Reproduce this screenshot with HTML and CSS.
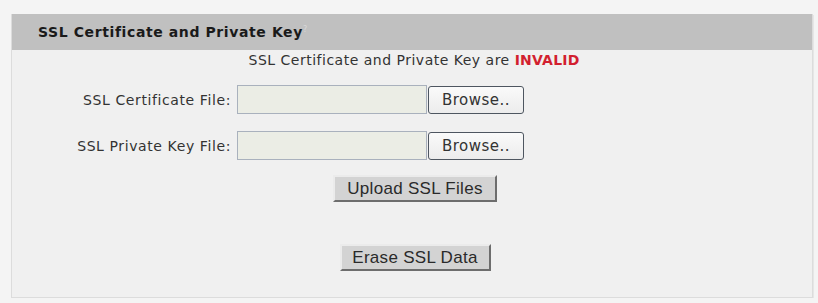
FILE: index.html
```html
<!DOCTYPE html>
<html>
<head>
<meta charset="utf-8">
<link rel="stylesheet" href="styles.css">
</head>
<body>
<div class="panel">
  <div class="panel-head">SSL Certificate and Private Key<span class="mark">?</span></div>
  <div class="panel-body">
    <div class="status">SSL Certificate and Private Key are <span class="invalid">INVALID</span></div>
    <div class="file-rows">
      <label class="file-label">SSL Certificate File:</label>
      <div class="file-ctrl"><span class="file-input"></span><button class="browse">Browse..</button></div>
      <label class="file-label">SSL Private Key File:</label>
      <div class="file-ctrl"><span class="file-input"></span><button class="browse">Browse..</button></div>
    </div>
    <div class="actions">
      <button class="btn upload">Upload SSL Files</button>
      <button class="btn erase">Erase SSL Data</button>
    </div>
  </div>
</div>
</body>
</html>
```
FILE: styles.css
```css
html, body {
  margin: 0;
  padding: 0;
  background: #f4f4f4;
}
body {
  padding: 14px 7px 0 11px;
  font-family: "DejaVu Sans", sans-serif;
  color: #333;
}
.panel {
  width: 800px;
  border: 1px solid #dcdcdc;
  border-top: none;
  background: #f0f0f0;
  box-shadow: 1px 1px 0 #e6e6e6;
}
.panel-head {
  height: 36px;
  background: #c0c0c0;
  padding-left: 26px;
  font-size: 14px;
  letter-spacing: 0.6px;
  font-weight: bold;
  color: #1a1a1a;
  display: flex;
  align-items: center;
}
.mark {
  font-size: 8px;
  color: #d8d8d8;
  align-self: flex-start;
  margin-top: 11px;
  font-weight: normal;
}
.panel-body {
  padding: 2px 0 26px;
}
.status {
  text-align: center;
  font-size: 14px;
  letter-spacing: 0.5px;
  color: #333;
  padding-left: 4px;
}
.invalid {
  color: #d21f2f;
  font-weight: bold;
  letter-spacing: 0.2px;
}
.file-rows {
  display: grid;
  grid-template-columns: 219px auto;
  column-gap: 6px;
  row-gap: 17px;
  margin-top: 17px;
  align-items: center;
}
.file-label {
  text-align: right;
  font-size: 14px;
  letter-spacing: 0.6px;
  color: #333;
}
.file-ctrl {
  display: flex;
  align-items: center;
  gap: 1px;
}
.file-input {
  display: block;
  width: 188px;
  height: 27px;
  border: 1px solid #a9b1bd;
  background: #ebede5;
  box-sizing: content-box;
}
.browse {
  width: 96px;
  height: 28px;
  border: 1px solid #4e5660;
  border-radius: 3px;
  background: linear-gradient(#fafafa, #ececec);
  font-family: "DejaVu Sans", sans-serif;
  font-size: 15px;
  letter-spacing: 0.5px;
  color: #333;
  padding: 0;
}
.actions {
  display: flex;
  flex-direction: column;
  align-items: center;
  gap: 42px;
  margin-top: 15px;
  padding-left: 6px;
}
.btn {
  font-family: "Liberation Sans", sans-serif;
  font-size: 17px;
  letter-spacing: 0.3px;
  color: #2a2a2a;
  background: #d3d3d3;
  border: 2px solid;
  border-color: #ebebeb #6d6d6d #6d6d6d #ebebeb;
  padding: 0;
  height: 27px;
}
.upload { width: 164px; }
.erase { width: 151px; }
```
